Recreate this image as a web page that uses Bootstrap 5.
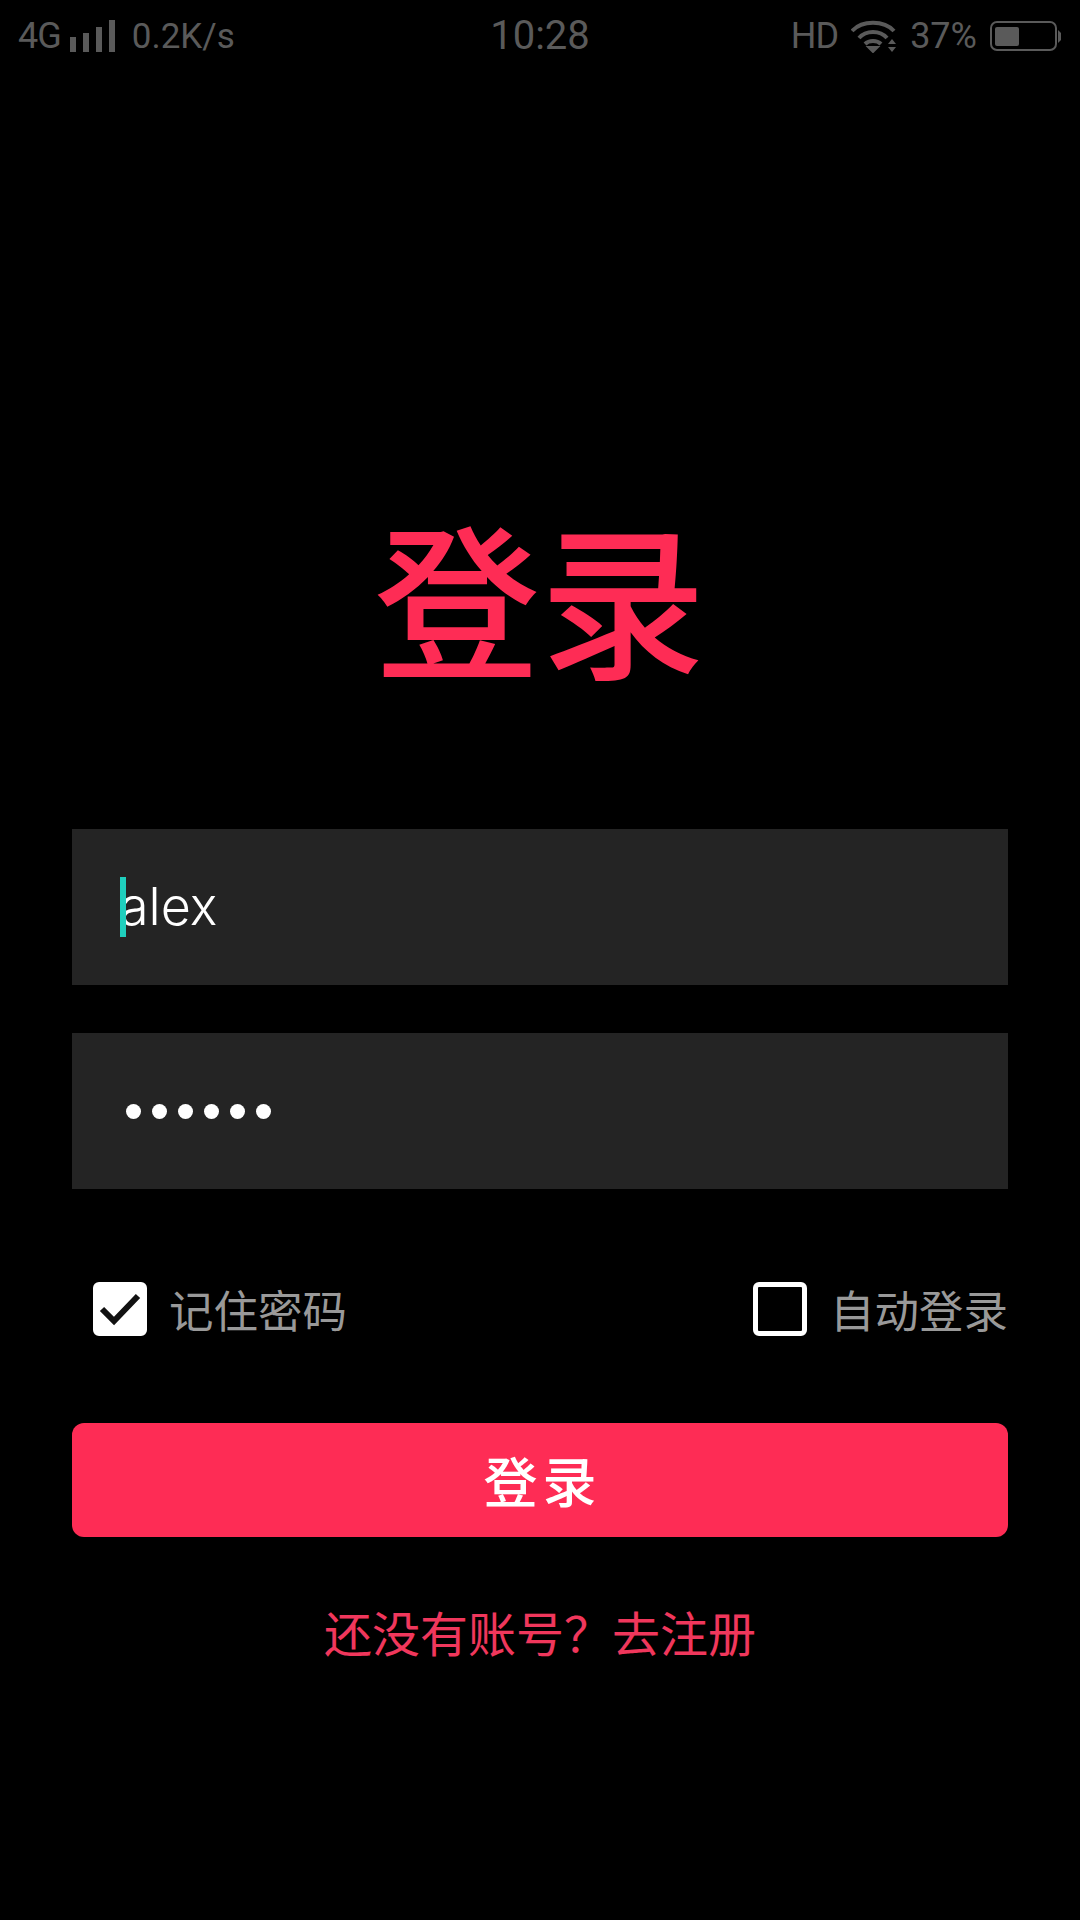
<!DOCTYPE html>
<html lang="zh-CN">
<head>
    <meta charset="UTF-8">
    <meta name="viewport" content="width=device-width, initial-scale=1">
    <title>登录</title>
    <link href="https://cdn.jsdelivr.net/npm/bootstrap@5.3.0/dist/css/bootstrap.min.css" rel="stylesheet">
    <script src="https://cdn.jsdelivr.net/npm/bootstrap@5.3.0/dist/js/bootstrap.bundle.min.js"></script>
    <style>
        body {
            background-color: #000;
            font-family: "Noto Sans CJK SC", "Liberation Sans", sans-serif;
            width: 1080px;
            height: 1920px;
            overflow: hidden;
        }
        .status-bar {
            height: 72px;
            padding: 0 18px;
            color: #5a5a5a;
            font-family: Roboto, "Liberation Sans", sans-serif;
            font-size: 35px;
            line-height: 1;
        }
        .status-side { width: 400px; gap: 13px; }
        .status-tight { font-size: 36px; letter-spacing: -1px; }
        .status-gap { margin-right: -4px; }
        .status-speed { margin-left: 4px; }
        .status-pct { font-size: 36px; }
        .status-time { font-size: 40px; }
        .login-title {
            margin: 438px 0 0;
            height: 168px;
            color: #fe2c55;
            font-size: 166px;
            font-weight: 500;
            line-height: 168px;
            text-align: center;
        }
        .login-form { margin: 151px 72px 0; }
        .field-box {
            height: 156px;
            background: #242424;
            color: #fff;
            padding-left: 48px;
        }
        .field-box + .field-box { margin-top: 48px; }
        .field-text {
            font-family: Inter, "Liberation Sans", sans-serif;
            font-size: 52px;
            font-weight: 300;
            line-height: 60px;
        }
        .field-caret {
            position: absolute;
            left: 0;
            top: 0;
            width: 6px;
            height: 60px;
            background: #1fcfbd;
        }
        .pwd-dot {
            width: 15px;
            height: 15px;
            border-radius: 50%;
            background: #fff;
        }
        .pwd-dots { gap: 11px; padding-left: 6px; }
        .option-row {
            margin-top: 93px;
            padding-left: 21px;
            height: 54px;
            color: #999;
            font-size: 44.5px;
            line-height: 54px;
        }
        .check-box {
            width: 54px;
            height: 54px;
            border: 5px solid #fff;
            border-radius: 6px;
            margin-right: 23px;
        }
        .check-box.is-on { background: #fff; margin-right: 22px; }
        .submit-btn {
            display: block;
            width: 100%;
            height: 114px;
            margin-top: 87px;
            padding-left: 17px;
            background: #fe2c55;
            border: 0;
            border-radius: 12px;
            color: #fff;
            font-size: 54px;
            font-weight: 500;
            letter-spacing: 5px;
            line-height: 1;
        }
        .register-link {
            margin-top: 61px;
            color: #f0375c;
            font-size: 48px;
            line-height: 66px;
            text-align: center;
        }
    </style>
</head>
<body>
    <div class="status-bar d-flex align-items-center justify-content-between">
        <div class="status-side d-flex align-items-center">
            <span class="status-tight status-gap">4G</span>
            <svg width="45" height="32" viewBox="0 0 45 32" fill="#5a5a5a">
                <rect x="0" y="17" width="6" height="15"/>
                <rect x="13" y="13" width="6" height="19"/>
                <rect x="26" y="7" width="6" height="25"/>
                <rect x="39" y="0" width="6" height="32"/>
            </svg>
            <span class="status-speed">0.2K/s</span>
        </div>
        <span class="status-time">10:28</span>
        <div class="status-side d-flex align-items-center justify-content-end">
            <span class="status-tight">HD</span>
            <svg width="46" height="33" viewBox="0 0 46 33" fill="none" stroke="#5a5a5a" stroke-width="4">
                <path d="M1 11 C11 0 33 0 43 11"/>
                <path d="M8 18 C15 10 29 10 36 18"/>
                <path d="M14 24 C18 20 26 20 30 24"/>
                <path d="M17 27 L22 32 L27 27 Z" fill="#5a5a5a" stroke-width="2"/>
                <path d="M37 24 L41 19 L45 24 Z M37 27 L45 27 L41 32 Z" fill="#5a5a5a" stroke="none"/>
            </svg>
            <span class="status-pct">37%</span>
            <svg width="72" height="30" viewBox="0 0 72 30" fill="none">
                <rect x="1" y="1" width="65" height="28" rx="6" stroke="#5a5a5a" stroke-width="2"/>
                <rect x="5" y="6" width="24" height="19" rx="2" fill="#5a5a5a"/>
                <path d="M68 9 L71 12 L71 19 L68 22 Z" fill="#5a5a5a"/>
            </svg>
        </div>
    </div>

    <h1 class="login-title">登录</h1>

    <form class="login-form" onsubmit="return false">
        <div class="field-box d-flex align-items-center">
            <span class="field-text position-relative">
                <span class="field-caret"></span>alex
            </span>
        </div>
        <div class="field-box d-flex align-items-center">
            <div class="pwd-dots d-flex">
                <span class="pwd-dot"></span>
                <span class="pwd-dot"></span>
                <span class="pwd-dot"></span>
                <span class="pwd-dot"></span>
                <span class="pwd-dot"></span>
                <span class="pwd-dot"></span>
            </div>
        </div>

        <div class="option-row d-flex justify-content-between">
            <div class="d-flex align-items-center">
                <span class="check-box is-on">
                    <svg class="d-block" width="44" height="44" viewBox="0 0 44 44" fill="none" stroke="#111" stroke-width="6">
                        <path d="M4 22 L16 34 L40 9"/>
                    </svg>
                </span>
                <span>记住密码</span>
            </div>
            <div class="d-flex align-items-center">
                <span class="check-box"></span>
                <span>自动登录</span>
            </div>
        </div>

        <button class="submit-btn btn" type="submit">登录</button>
        <div class="register-link">还没有账号？去注册</div>
    </form>
</body>
</html>
